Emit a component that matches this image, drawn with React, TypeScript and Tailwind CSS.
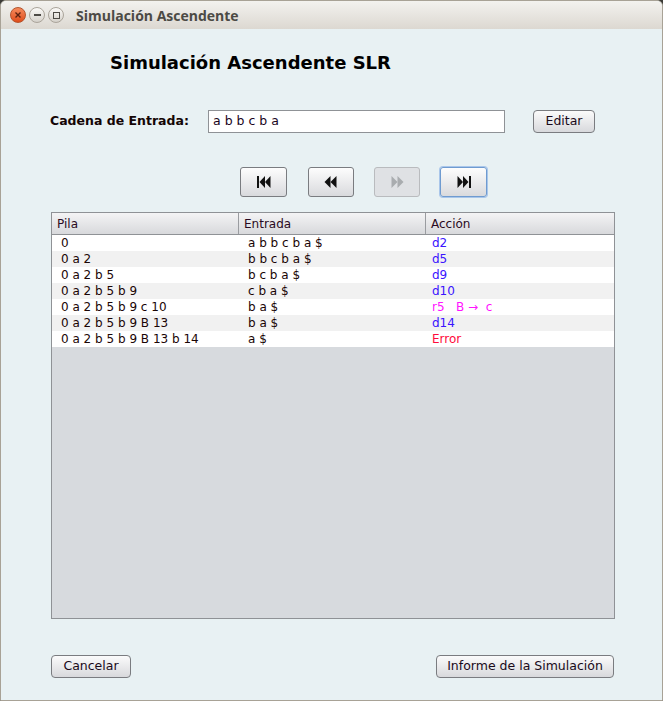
import React from 'react';

const rows = [
  { pila: '0', entrada: 'a b b c b a $', accion: 'd2', kind: 'd' },
  { pila: '0 a 2', entrada: 'b b c b a $', accion: 'd5', kind: 'd' },
  { pila: '0 a 2 b 5', entrada: 'b c b a $', accion: 'd9', kind: 'd' },
  { pila: '0 a 2 b 5 b 9', entrada: 'c b a $', accion: 'd10', kind: 'd' },
  { pila: '0 a 2 b 5 b 9 c 10', entrada: 'b a $', accion: 'r5   B \u2192  c', kind: 'r' },
  { pila: '0 a 2 b 5 b 9 B 13', entrada: 'b a $', accion: 'd14', kind: 'd' },
  { pila: '0 a 2 b 5 b 9 B 13 b 14', entrada: 'a $', accion: 'Error', kind: 'e' },
];

const accionColor: Record<string, string> = {
  d: 'text-[#3a14ff]',
  r: 'text-[#ff14ff]',
  e: 'text-[#ff0a3c]',
};

function NavIcon({ dir, bar, disabled }: { dir: 'l' | 'r'; bar?: boolean; disabled?: boolean }) {
  const c = disabled ? '#a9acaf' : '#111';
  return (
    <svg width="18" height="14" viewBox="0 0 18 14">
      {dir === 'l' ? (
        <>
          {bar && <rect x="2" y="1" width="2" height="12" fill={c} />}
          <polygon points={bar ? '4.5,7 10,1 10,13' : '2.5,7 8.5,1 8.5,13'} fill={c} />
          <polygon points={bar ? '10,7 15.5,1 15.5,13' : '8.5,7 14.5,1 14.5,13'} fill={c} />
        </>
      ) : (
        <>
          <polygon points={bar ? '2.5,1 8,7 2.5,13' : '3.5,1 9.5,7 3.5,13'} fill={c} />
          <polygon points={bar ? '8,1 13.5,7 8,13' : '9.5,1 15.5,7 9.5,13'} fill={c} />
          {bar && <rect x="14" y="1" width="2" height="12" fill={c} />}
        </>
      )}
    </svg>
  );
}

function NavButton({ className, children, focus, disabled }: { className: string; children: React.ReactNode; focus?: boolean; disabled?: boolean }) {
  return (
    <button
      className={`${className} h-[30px] flex items-center justify-center rounded-[3px] border ${
        focus ? 'border-[#6f9bd0] shadow-[0_0_0_1px_#a9c6ea]' : disabled ? 'border-[#b9bbbe]' : 'border-[#7a7c80]'
      } ${disabled ? 'bg-[#dfe1e4]' : 'bg-gradient-to-b from-[#fdfdfd] to-[#d9dadd]'}`}
    >
      {children}
    </button>
  );
}

function PlainButton({ className, children }: { className: string; children: React.ReactNode }) {
  return (
    <button
      className={`${className} h-[23px] rounded-[4px] border border-[#7a7c80] bg-gradient-to-b from-[#fbfbfb] to-[#d8d9dc] text-[12.5px] text-[#1a0a1a] flex items-center justify-center`}
    >
      {children}
    </button>
  );
}

export default function App() {
  return (
    <div className="w-[663px] h-[701px] flex flex-col bg-[#3c3b37]" style={{ fontFamily: '"DejaVu Sans", sans-serif' }}>
      <div className="flex-1 flex flex-col rounded-t-[6px] border border-[#a8a296] overflow-hidden bg-[#e8f1f3]">
        {/* Title bar */}
        <div className="h-[28px] shrink-0 flex items-center bg-gradient-to-b from-[#f3f2ef] to-[#dcd8d1] px-[9px] gap-[3px]">
          <div className="w-[16px] h-[16px] rounded-full bg-gradient-to-b from-[#f58a5b] to-[#df4b16] border border-[#b4532c] flex items-center justify-center">
            <svg width="8" height="8" viewBox="0 0 8 8">
              <path d="M1.5 1.5 L6.5 6.5 M6.5 1.5 L1.5 6.5" stroke="#5b2210" strokeWidth="1.4" />
            </svg>
          </div>
          <div className="w-[16px] h-[16px] rounded-full bg-gradient-to-b from-[#fbfaf8] to-[#d5d1ca] border border-[#aaa49a] flex items-center justify-center">
            <div className="w-[7px] h-[1.5px] bg-[#4c4a45]" />
          </div>
          <div className="w-[16px] h-[16px] rounded-full bg-gradient-to-b from-[#fbfaf8] to-[#d5d1ca] border border-[#aaa49a] flex items-center justify-center">
            <div className="w-[7px] h-[7px] border border-[#4c4a45]" />
          </div>
          <span className="ml-[9px] text-[14px] font-bold text-[#4c4a45]" style={{ fontFamily: '"Open Sans", sans-serif' }}>
            Simulación Ascendente
          </span>
        </div>

        {/* Content */}
        <div className="flex-1 flex flex-col">
          <h1 className="mt-[23px] ml-[109px] text-[18px] leading-[21px] font-bold text-black">Simulación Ascendente SLR</h1>

          <div className="mt-[37px] flex items-center">
            <span className="ml-[49px] w-[158px] text-[12.5px] font-bold text-[#140505]">Cadena de Entrada:</span>
            <div className="w-[297px] h-[23px] border border-[#8f9296] bg-white flex items-center px-[4px] text-[12.5px] text-[#1a0522]">
              a b b c b a
            </div>
            <PlainButton className="ml-[28px] w-[62px]">Editar</PlainButton>
          </div>

          <div className="mt-[34px] flex ml-[239px]">
            <NavButton className="w-[47px]"><NavIcon dir="l" bar /></NavButton>
            <NavButton className="w-[46px] ml-[21px]"><NavIcon dir="l" /></NavButton>
            <NavButton className="w-[46px] ml-[20px]" disabled><NavIcon dir="r" disabled /></NavButton>
            <NavButton className="w-[47px] ml-[20px]" focus><NavIcon dir="r" bar /></NavButton>
          </div>

          {/* Table */}
          <div className="mt-[15px] ml-[50px] w-[564px] h-[407px] border border-[#8f9296] bg-[#d7dade] flex flex-col text-[12px]">
            <div className="h-[22px] shrink-0 flex bg-gradient-to-b from-[#f4f4f5] to-[#d8d9dc] border-b border-[#8f9296] text-[#2a0a22]">
              <div className="w-[187px] border-r border-[#9a9ca0] pl-[5px] flex items-center">Pila</div>
              <div className="w-[187px] border-r border-[#9a9ca0] pl-[5px] flex items-center">Entrada</div>
              <div className="flex-1 pl-[5px] flex items-center">Acción</div>
            </div>
            {rows.map((r, i) => (
              <div key={i} className={`h-[16px] flex items-center ${i % 2 === 0 ? 'bg-white' : 'bg-[#f1f1f1]'} text-[#1a0505]`}>
                <div className="w-[187px] pl-[9px] whitespace-pre">{r.pila}</div>
                <div className="w-[187px] pl-[9px] whitespace-pre">{r.entrada}</div>
                <div className={`flex-1 pl-[6px] whitespace-pre ${accionColor[r.kind]}`}>{r.accion}</div>
              </div>
            ))}
          </div>

          <div className="mt-[36px] flex items-center justify-between pl-[50px] pr-[48px]">
            <PlainButton className="w-[80px]">Cancelar</PlainButton>
            <PlainButton className="w-[178px]">Informe de la Simulación</PlainButton>
          </div>
        </div>
      </div>
    </div>
  );
}
